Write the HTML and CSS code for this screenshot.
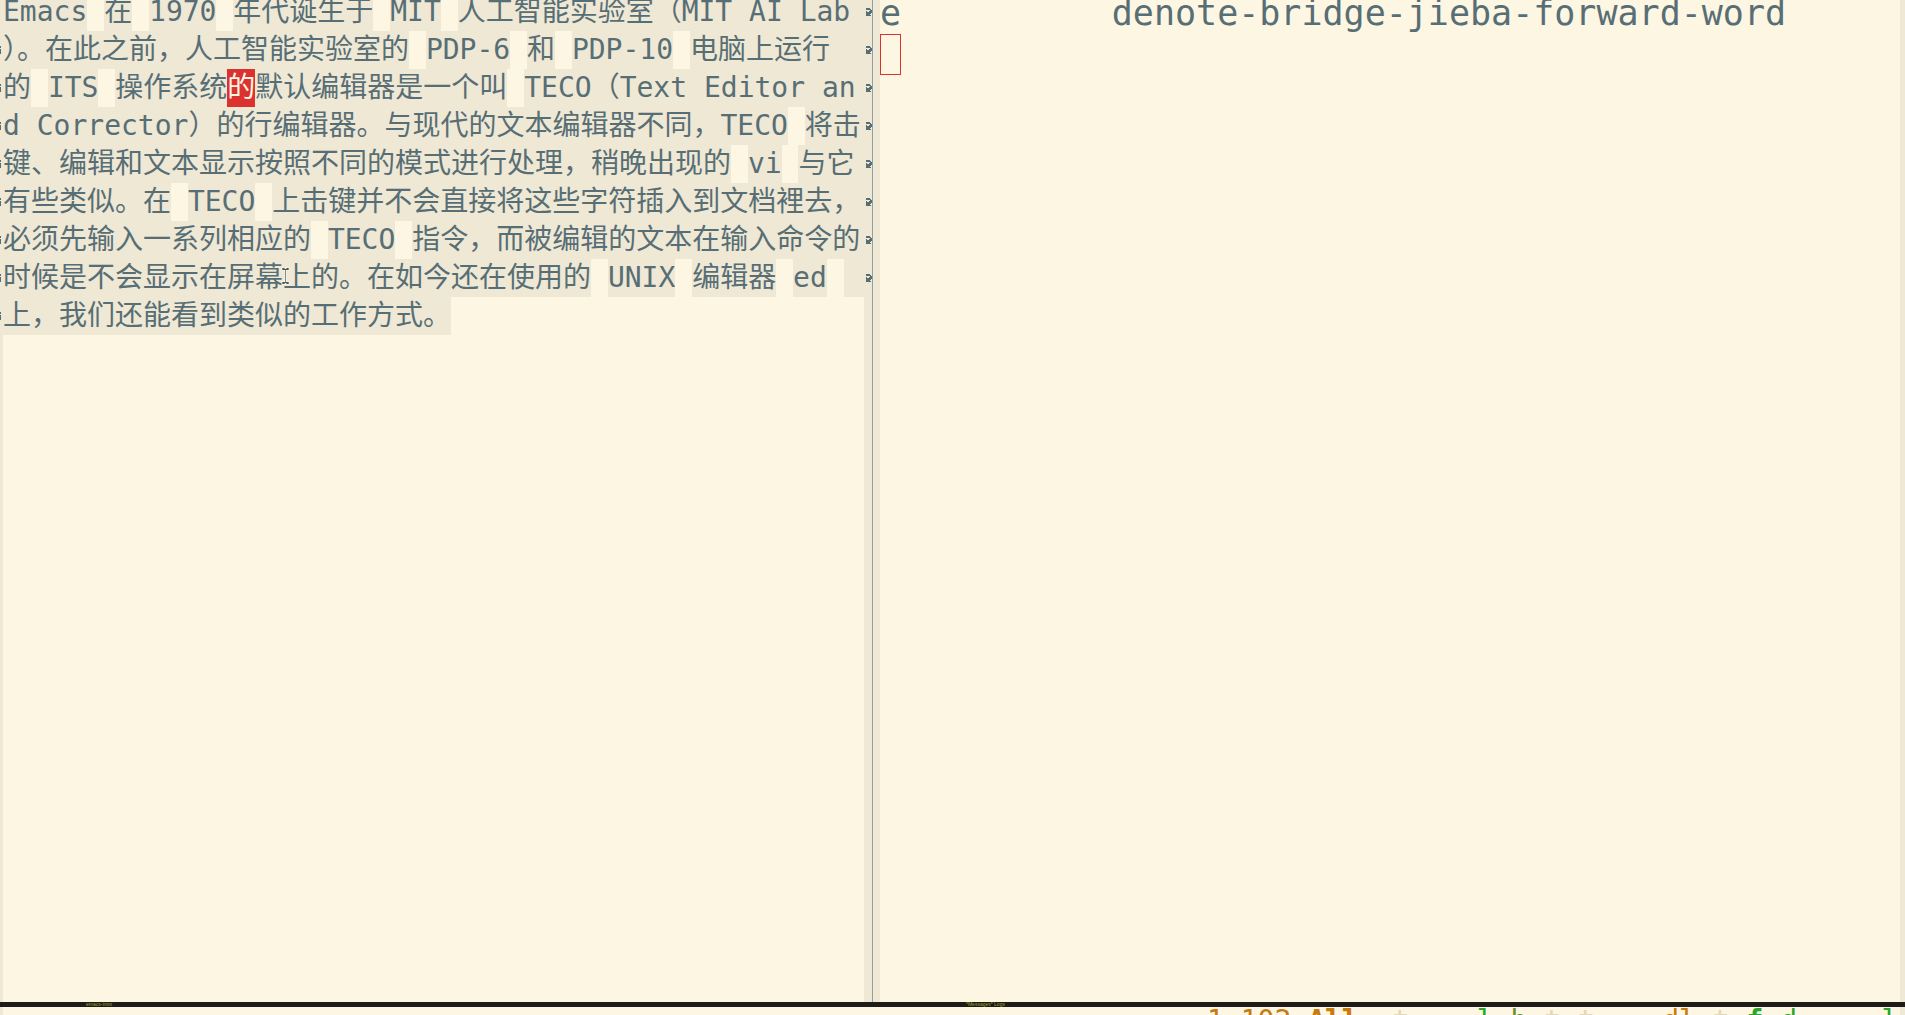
FILE: index.html
```html
<!DOCTYPE html>
<html lang="zh">
<head>
<meta charset="utf-8">
<title>Emacs</title>
<link rel="stylesheet" href="styles.css">
</head>
<body>
<div class="frame">
  <div class="windows">
    <div class="win-left">
      <div class="fringe fringe-ll">
        <div class="fr-stack">
          <div class="fr-row"></div>
          <div class="fr-row"><svg class="larrow" viewBox="5 0 3 8" width="3" height="8"><path d="M2 0h4v1H2zM1 1h5v1H1zM0 2h2v1H0zM0 3h3v1H0zM5 3h1v1H5zM0 4h6v1H0zM1 5h5v1H1zM2 6h4v1H2zM1 7h5v1H1z"/></svg></div>
          <div class="fr-row"><svg class="larrow" viewBox="5 0 3 8" width="3" height="8"><path d="M2 0h4v1H2zM1 1h5v1H1zM0 2h2v1H0zM0 3h3v1H0zM5 3h1v1H5zM0 4h6v1H0zM1 5h5v1H1zM2 6h4v1H2zM1 7h5v1H1z"/></svg></div>
          <div class="fr-row"><svg class="larrow" viewBox="5 0 3 8" width="3" height="8"><path d="M2 0h4v1H2zM1 1h5v1H1zM0 2h2v1H0zM0 3h3v1H0zM5 3h1v1H5zM0 4h6v1H0zM1 5h5v1H1zM2 6h4v1H2zM1 7h5v1H1z"/></svg></div>
          <div class="fr-row"><svg class="larrow" viewBox="5 0 3 8" width="3" height="8"><path d="M2 0h4v1H2zM1 1h5v1H1zM0 2h2v1H0zM0 3h3v1H0zM5 3h1v1H5zM0 4h6v1H0zM1 5h5v1H1zM2 6h4v1H2zM1 7h5v1H1z"/></svg></div>
          <div class="fr-row"><svg class="larrow" viewBox="5 0 3 8" width="3" height="8"><path d="M2 0h4v1H2zM1 1h5v1H1zM0 2h2v1H0zM0 3h3v1H0zM5 3h1v1H5zM0 4h6v1H0zM1 5h5v1H1zM2 6h4v1H2zM1 7h5v1H1z"/></svg></div>
          <div class="fr-row"><svg class="larrow" viewBox="5 0 3 8" width="3" height="8"><path d="M2 0h4v1H2zM1 1h5v1H1zM0 2h2v1H0zM0 3h3v1H0zM5 3h1v1H5zM0 4h6v1H0zM1 5h5v1H1zM2 6h4v1H2zM1 7h5v1H1z"/></svg></div>
          <div class="fr-row"><svg class="larrow" viewBox="5 0 3 8" width="3" height="8"><path d="M2 0h4v1H2zM1 1h5v1H1zM0 2h2v1H0zM0 3h3v1H0zM5 3h1v1H5zM0 4h6v1H0zM1 5h5v1H1zM2 6h4v1H2zM1 7h5v1H1z"/></svg></div>
          <div class="fr-row"><svg class="larrow" viewBox="5 0 3 8" width="3" height="8"><path d="M2 0h4v1H2zM1 1h5v1H1zM0 2h2v1H0zM0 3h3v1H0zM5 3h1v1H5zM0 4h6v1H0zM1 5h5v1H1zM2 6h4v1H2zM1 7h5v1H1z"/></svg></div>
        </div>
      </div>
      <div class="text-l">
        <div class="lines">
          <div class="ln">Emacs<span class="g"> </span>在<span class="g"> </span>1970<span class="g"> </span>年代诞生于<span class="g"> </span>MIT<span class="g"> </span>人工智能实验室（MIT AI Lab</div>
          <div class="ln">）。在此之前，人工智能实验室的<span class="g"> </span>PDP-6<span class="g"> </span>和<span class="g"> </span>PDP-10<span class="g"> </span>电脑上运行</div>
          <div class="ln">的<span class="g"> </span>ITS<span class="g"> </span>操作系统<span class="hl">的</span>默认编辑器是一个叫<span class="g"> </span>TECO（Text Editor an</div>
          <div class="ln">d Corrector）的行编辑器。与现代的文本编辑器不同，TECO<span class="g"> </span>将击</div>
          <div class="ln">键、编辑和文本显示按照不同的模式进行处理，稍晚出现的<span class="g"> </span>vi<span class="g"> </span>与它</div>
          <div class="ln">有些类似。在<span class="g"> </span>TECO<span class="g"> </span>上击键并不会直接将这些字符插入到文档裡去，</div>
          <div class="ln">必须先输入一系列相应的<span class="g"> </span>TECO<span class="g"> </span>指令，而被编辑的文本在输入命令的</div>
          <div class="ln">时候是不会显示在屏幕上的。在如今还在使用的<span class="g"> </span>UNIX<span class="g"> </span>编辑器<span class="g"> </span>ed<span class="g"> </span></div>
          <div class="ln ln-last">上，我们还能看到类似的工作方式。</div>
        </div>
      </div>
      <div class="fringe fringe-lr">
        <div class="fr-stack">
          <div class="fr-row"><svg class="rarrow" viewBox="0 0 8 8" width="8" height="8"><path d="M2 0h4v1H2zM2 1h5v1H2zM6 2h2v1H6zM2 3h1v1H2zM5 3h3v1H5zM2 4h6v1H2zM2 5h5v1H2zM2 6h4v1H2zM2 7h5v1H2z"/></svg></div>
          <div class="fr-row"><svg class="rarrow" viewBox="0 0 8 8" width="8" height="8"><path d="M2 0h4v1H2zM2 1h5v1H2zM6 2h2v1H6zM2 3h1v1H2zM5 3h3v1H5zM2 4h6v1H2zM2 5h5v1H2zM2 6h4v1H2zM2 7h5v1H2z"/></svg></div>
          <div class="fr-row"><svg class="rarrow" viewBox="0 0 8 8" width="8" height="8"><path d="M2 0h4v1H2zM2 1h5v1H2zM6 2h2v1H6zM2 3h1v1H2zM5 3h3v1H5zM2 4h6v1H2zM2 5h5v1H2zM2 6h4v1H2zM2 7h5v1H2z"/></svg></div>
          <div class="fr-row"><svg class="rarrow" viewBox="0 0 8 8" width="8" height="8"><path d="M2 0h4v1H2zM2 1h5v1H2zM6 2h2v1H6zM2 3h1v1H2zM5 3h3v1H5zM2 4h6v1H2zM2 5h5v1H2zM2 6h4v1H2zM2 7h5v1H2z"/></svg></div>
          <div class="fr-row"><svg class="rarrow" viewBox="0 0 8 8" width="8" height="8"><path d="M2 0h4v1H2zM2 1h5v1H2zM6 2h2v1H6zM2 3h1v1H2zM5 3h3v1H5zM2 4h6v1H2zM2 5h5v1H2zM2 6h4v1H2zM2 7h5v1H2z"/></svg></div>
          <div class="fr-row"><svg class="rarrow" viewBox="0 0 8 8" width="8" height="8"><path d="M2 0h4v1H2zM2 1h5v1H2zM6 2h2v1H6zM2 3h1v1H2zM5 3h3v1H5zM2 4h6v1H2zM2 5h5v1H2zM2 6h4v1H2zM2 7h5v1H2z"/></svg></div>
          <div class="fr-row"><svg class="rarrow" viewBox="0 0 8 8" width="8" height="8"><path d="M2 0h4v1H2zM2 1h5v1H2zM6 2h2v1H6zM2 3h1v1H2zM5 3h3v1H5zM2 4h6v1H2zM2 5h5v1H2zM2 6h4v1H2zM2 7h5v1H2z"/></svg></div>
          <div class="fr-row"><svg class="rarrow" viewBox="0 0 8 8" width="8" height="8"><path d="M2 0h4v1H2zM2 1h5v1H2zM6 2h2v1H6zM2 3h1v1H2zM5 3h3v1H5zM2 4h6v1H2zM2 5h5v1H2zM2 6h4v1H2zM2 7h5v1H2z"/></svg></div>
        </div>
      </div>
    </div>
    <div class="divider"></div>
    <div class="win-right">
      <div class="fringe fringe-rl"></div>
      <div class="text-r">
        <div class="rlines">
          <div class="rln">e          denote-bridge-jieba-forward-word</div>
          <div class="rln"><span class="cursor"></span></div>
        </div>
      </div>
      <div class="fringe fringe-rr"></div>
    </div>
  </div>
  <div class="modeline">
    <div class="ml-left"><span class="ml-name">emacs-intro</span></div>
    <div class="ml-right"><span class="ml-name">*Messages* Logs</span></div>
  </div>
  <div class="echo">
    <div class="fringe fringe-ll"></div>
    <div class="echo-text"><span class="e-or">1:102 </span><span class="e-or e-b">All</span>  <span class="e-pale">t</span>    <span class="e-gr">l</span> <span class="e-dg">b</span> <span class="e-pale">t</span> <span class="e-pale">t</span>    <span class="e-or">d</span><span class="e-or">l</span> <span class="e-pale">t</span> <span class="e-gr e-b">f</span> <span class="e-gr">d</span>     <span class="e-gr">l</span> <span class="e-gr">7</span></div>
    <div class="fringe fringe-rr"></div>
  </div>
</div>
<svg class="ibeam" viewBox="0 0 9 18" width="9" height="18"><path d="M1 1h3v1h1v-1h3v2H5v12h3v2H5v-1H4v1H1v-2h3V3H1z" fill="#111" stroke="#fff" stroke-width="0.6"/></svg>
</body>
</html>
```

FILE: styles.css
```css
html, body {
  margin: 0;
  padding: 0;
}

body {
  width: 1905px;
  height: 1015px;
  overflow: hidden;
  position: relative;
  background: #fdf6e3;
  color: #586e75;
  font-family: "DejaVu Sans Mono", "Noto Sans CJK SC", monospace;
}

.frame {
  display: flex;
  flex-direction: column;
  height: 1015px;
}

.windows {
  display: flex;
  height: 1002px;
  flex: none;
  overflow: hidden;
}

.win-left {
  display: flex;
  width: 872px;
  flex: none;
}

.fringe {
  background: #eee8d5;
  flex: none;
  overflow: hidden;
}

.fringe-ll {
  width: 3px;
}

.fringe-lr {
  width: 8px;
}

.fr-stack {
  margin-top: -7px;
  display: flex;
  flex-direction: column;
}

.fr-row {
  height: 38px;
  display: flex;
  align-items: center;
}

.fr-row svg {
  display: block;
  fill: #586e75;
}

.text-l {
  width: 861px;
  flex: none;
  overflow: hidden;
  font-size: 28px;
}

.lines {
  margin-top: -7px;
}

.ln {
  height: 38px;
  line-height: 38px;
  white-space: pre;
  background: #eee8d5;
}

.ln-last {
  width: fit-content;
}

.g {
  display: inline-block;
  height: 38px;
  vertical-align: top;
  background: #fdf6e3;
}

.hl {
  display: inline-block;
  height: 38px;
  vertical-align: top;
  background: #dc322f;
  color: #fdf6e3;
}

.divider {
  width: 1px;
  flex: none;
  background: #8fa1a5;
}

.win-right {
  display: flex;
  flex: 1;
}

.fringe-rl {
  width: 7px;
}

.fringe-rr {
  width: 5px;
}

.text-r {
  flex: 1;
  overflow: hidden;
  font-size: 35px;
}

.rlines {
  margin-top: -7px;
}

.rln {
  height: 41px;
  line-height: 41px;
  white-space: pre;
}

.cursor {
  display: inline-block;
  box-sizing: border-box;
  width: 21px;
  height: 41px;
  vertical-align: top;
  border: 1px solid #dc322f;
}

.modeline {
  height: 5px;
  flex: none;
  display: flex;
  background: #1d1c19;
  font-family: "Liberation Sans", sans-serif;
  font-size: 5px;
  line-height: 5px;
  color: #9fa32a;
  overflow: hidden;
}

.ml-left {
  width: 873px;
  flex: none;
  padding-left: 86px;
  box-sizing: border-box;
}

.ml-right {
  flex: 1;
  padding-left: 93px;
}

.echo {
  flex: 1;
  display: flex;
  overflow: hidden;
}

.echo-text {
  flex: 1;
  padding-left: 1204px;
  font-size: 28px;
  line-height: 28px;
  white-space: pre;
  overflow: hidden;
}

.e-or {
  color: #c77b0f;
}

.e-b {
  font-weight: bold;
}

.e-pale {
  color: #e3d8b8;
}

.e-gr {
  color: #2aa52a;
}

.e-dg {
  color: #6a8f2a;
}

.ibeam {
  position: absolute;
  left: 281px;
  top: 267px;
}
```
